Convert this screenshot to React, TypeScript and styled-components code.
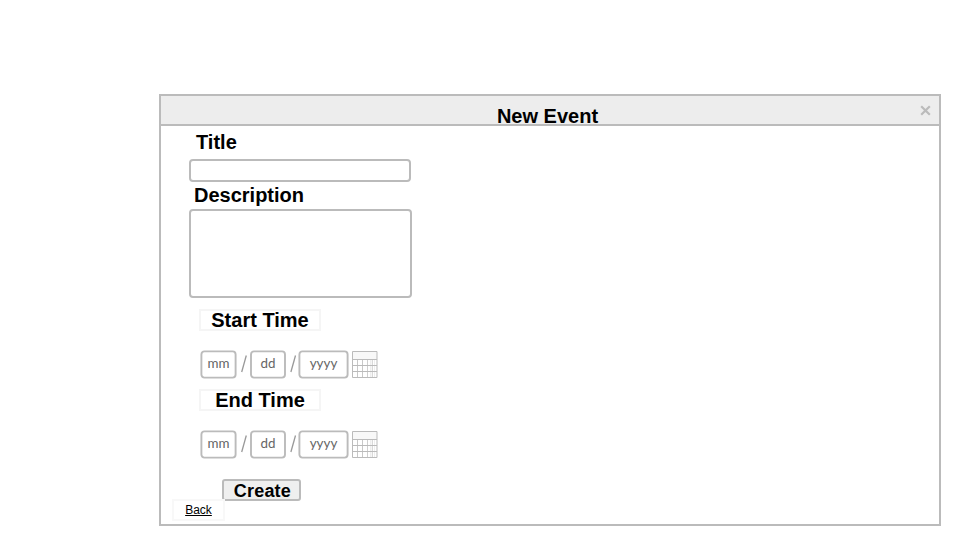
import React from "react";
import styled, { createGlobalStyle } from "styled-components";

const GlobalStyle = createGlobalStyle`
  * { box-sizing: border-box; }
  body {
    margin: 0;
    background: #fff;
    color: #000;
    font-family: "Liberation Sans", Arial, sans-serif;
    overflow: hidden;
  }
`;

const Page = styled.main`
  height: 545px;
  padding: 94px 18px 0 159px;
`;

const Dialog = styled.section`
  height: 432px;
  border: 2px solid #bbb;
`;

const Header = styled.header`
  display: grid;
  grid-template-columns: 1fr auto 1fr;
  height: 30px;
  background: #ededed;
  border-bottom: 2px solid #bbb;
`;

const Heading = styled.h1`
  grid-column: 2;
  margin: 10px 0 0;
  padding-right: 5px;
  font-size: 20px;
  line-height: 20px;
`;

const CloseButton = styled.button`
  justify-self: end;
  display: flex;
  width: 11px;
  height: 11px;
  margin: 9px 8px 0 0;
  padding: 0;
  border: 0;
  background: none;
`;

const Form = styled.form`
  display: flex;
  flex-direction: column;
  align-items: flex-start;
  padding: 6px 0 0 28px;
`;

const Label = styled.label<{ $indent: number }>`
  margin-left: ${(p) => p.$indent}px;
  font-size: 20px;
  font-weight: bold;
  line-height: 20px;
`;

const TitleInput = styled.input`
  width: 222px;
  height: 23px;
  margin: 7px 0 3px;
  border: 2px solid #bbb;
  border-radius: 4px;
  background: #fff;
`;

const DescriptionInput = styled.textarea`
  width: 223px;
  height: 89px;
  margin: 4px 0 11px;
  border: 2px solid #bbb;
  border-radius: 4px;
  background: #fff;
  resize: none;
`;

const TimeLabel = styled.div`
  width: 122px;
  height: 22px;
  margin-left: 10px;
  border: 2px solid #f5f5f5;
  font-size: 20px;
  font-weight: bold;
  line-height: 19px;
  text-align: center;
  white-space: nowrap;
`;

const DateRow = styled.div`
  display: flex;
  height: 29px;
  margin: 19px 0 10px 11px;
`;

const DatePart = styled.label<{ $width: number }>`
  display: grid;
  width: ${(p) => p.$width}px;
  height: 29px;
`;

const DateFrame = styled.svg`
  grid-area: 1 / 1;
  width: 100%;
  height: 29px;
`;

const DateInput = styled.input`
  grid-area: 1 / 1;
  width: 100%;
  height: 29px;
  padding: 0 0 3px;
  border: 0;
  background: transparent;
  font-family: Lato, sans-serif;
  font-size: 13.4px;
  text-align: center;
  &::placeholder {
    color: #666;
    opacity: 1;
  }
`;

const Slash = styled.svg<{ $width: number }>`
  width: ${(p) => p.$width}px;
  height: 29px;
`;

const CalendarIcon = styled.svg`
  width: 26px;
  height: 29px;
  margin-left: 3px;
`;

const CreateButton = styled.button`
  width: 79px;
  height: 22px;
  margin: 10px 0 0 33.4px;
  padding: 1px 0 0 1px;
  border: 2px solid #bbb;
  border-radius: 3px;
  background: #efefef;
  color: #000;
  font: bold 18px/18px "Liberation Sans", Arial, sans-serif;
  letter-spacing: 0.2px;
`;

const BackButton = styled.a`
  width: 53px;
  height: 22px;
  margin: -2px 0 0 -17px;
  border: 2px solid #f8f8f8;
  color: #000;
  font-size: 12px;
  line-height: 18px;
  text-align: center;
  text-decoration: underline;
`;

const Divider = ({ width, shift = 0 }: { width: number; shift?: number }) => (
  <Slash $width={width} viewBox={`0 0 ${width} 29`}>
    <path
      d={`M${4.7 + shift} 22 L${9.3 + shift} 5.5`}
      stroke="#999"
      strokeWidth="1.3"
    />
  </Slash>
);

const DateBox = ({ width, hint, inset = 1.4 }: { width: number; hint: string; inset?: number }) => (
  <DatePart $width={width}>
    <DateFrame>
      <rect
        x={inset}
        y="1.4"
        width={width - 2 * inset}
        height="26.2"
        rx="3"
        fill="#fff"
        stroke="#bbb"
        strokeWidth="1.9"
      />
    </DateFrame>
    <DateInput placeholder={hint} />
  </DatePart>
);

const DateField = ({ label }: { label: string }) => (
  <DateRow role="group" aria-label={label}>
    <DateBox width={37} hint="mm" />
    <Divider width={13} />
    <DateBox width={36} hint="dd" inset={1} />
    <Divider width={12} shift={0.2} />
    <DateBox width={51} hint="yyyy" />
    <CalendarIcon viewBox="0 0 26 29">
      <path d="M.5 1.5H25V27.5H.5Z" fill="#fff" />
      <path d="M.5 1.5H25V9.5H.5Z" fill="#f8f8f8" />
      <path d="M5.5 10V27M10.5 10V27" stroke="#c8c8c8" />
      <path d="M15.5 10V27M20.3 10V27" stroke="#cfcfcf" />
      <path d="M18.5 10V27M22.5 10V27" stroke="#eee" />
      <path d="M1 9.5H25M1 15.5H25M1 21.5H25" stroke="#bbb" />
      <path d="M.5 1.5H25V27.5H.5Z" fill="none" stroke="#bbb" />
    </CalendarIcon>
  </DateRow>
);

export default function App() {
  return (
    <>
      <GlobalStyle />
      <Page>
        <Dialog>
          <Header>
            <Heading>New Event</Heading>
            <CloseButton aria-label="Close">
              <svg width="11" height="11" viewBox="0 0 11 11">
                <path d="M1.2 1.2 9.8 9.8M9.8 1.2 1.2 9.8" stroke="#bbb" strokeWidth="2.2" />
              </svg>
            </CloseButton>
          </Header>
          <Form>
            <Label $indent={7} htmlFor="title">Title</Label>
            <TitleInput id="title" />
            <Label $indent={5} htmlFor="description">Description</Label>
            <DescriptionInput id="description" />
            <TimeLabel>Start Time</TimeLabel>
            <DateField label="Start Time" />
            <TimeLabel>End Time</TimeLabel>
            <DateField label="End Time" />
            <CreateButton type="button">Create</CreateButton>
            <BackButton href="#">Back</BackButton>
          </Form>
        </Dialog>
      </Page>
    </>
  );
}
